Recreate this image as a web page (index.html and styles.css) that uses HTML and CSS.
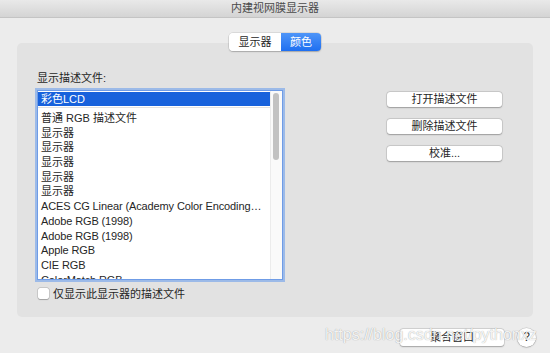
FILE: index.html
```html
<!DOCTYPE html>
<html lang="zh-CN">
<head>
<meta charset="utf-8">
<link rel="stylesheet" href="styles.css">
</head>
<body>
<div class="window">
  <div class="titlebar">内建视网膜显示器</div>
  <div class="tabs">
    <div class="seg">显示器</div>
    <div class="seg active">颜色</div>
  </div>
  <div class="panel">
    <div class="left">
      <div class="label">显示描述文件:</div>
      <div class="list">
        <div class="items">
          <div class="sel">彩色LCD</div>
          <div class="sep"></div>
          <div class="row">普通 RGB 描述文件</div>
          <div class="row">显示器</div>
          <div class="row">显示器</div>
          <div class="row">显示器</div>
          <div class="row">显示器</div>
          <div class="row">显示器</div>
          <div class="row latin">ACES CG Linear (Academy Color Encoding…</div>
          <div class="row latin">Adobe RGB (1998)</div>
          <div class="row latin">Adobe RGB (1998)</div>
          <div class="row latin">Apple RGB</div>
          <div class="row latin">CIE RGB</div>
          <div class="row latin">ColorMatch RGB</div>
        </div>
        <div class="track"><div class="thumb"></div></div>
      </div>
      <div class="check">
        <span class="box"></span>
        <span>仅显示此显示器的描述文件</span>
      </div>
    </div>
    <div class="right">
      <div class="btn">打开描述文件</div>
      <div class="btn">删除描述文件</div>
      <div class="btn">校准...</div>
    </div>
  </div>
  <div class="footer">
    <div class="btn wide">聚合窗口</div>
    <div class="help">?</div>
  </div>
  <div class="watermark">https://blog.csdn.net/pythonxz</div>
</div>
</body>
</html>
```
FILE: styles.css
```css
* { box-sizing: border-box; }
body {
  margin: 0;
  width: 550px;
  height: 353px;
  overflow: hidden;
  background: #ececec;
  font-family: "Liberation Sans", "Noto Sans CJK SC", sans-serif;
  font-size: 11px;
  color: #262626;
}
.window {
  position: relative;
  width: 550px;
  height: 353px;
  display: flex;
  flex-direction: column;
}
.titlebar {
  height: 18px;
  line-height: 17px;
  text-align: center;
  color: #4a4a4a;
  background: linear-gradient(#e9e9e9, #d4d4d4);
  border-bottom: 1px solid #c4c4c4;
}
.tabs {
  position: relative;
  z-index: 1;
  align-self: center;
  display: flex;
  margin-top: 15px;
  margin-bottom: -8px;
  height: 18px;
  border-radius: 4px;
  box-shadow: 0 0 0 0.5px rgba(0,0,0,0.15), 0 1px 1.5px rgba(0,0,0,0.2);
  overflow: hidden;
}
.seg {
  width: 52px;
  line-height: 18px;
  text-align: center;
  background: #fff;
}
.seg.active {
  width: 40px;
  color: #fff;
  background: linear-gradient(#4e95f8, #1e6ff1);
}
.panel {
  margin: 0 17px;
  height: 274px;
  padding: 29px 31px 0 20px;
  background: #e2e2e2;
  border-radius: 5px;
  display: flex;
  justify-content: space-between;
}
.left { width: 246px; }
.label {
  height: 13px;
  line-height: 13px;
  margin-bottom: 5px;
}
.list {
  height: 190px;
  display: flex;
  background: #fff;
  border: 1px solid #6f9ce6;
  box-shadow: 0 0 0 2px rgba(110,160,236,0.6);
  overflow: hidden;
}
.items {
  flex: 1;
  padding-top: 1px;
  min-width: 0;
}
.sel {
  height: 14px;
  line-height: 14px;
  color: #fff;
  background: #1862dc;
  margin-left: -2px;
  padding-left: 5px;
}
.sep {
  height: 1px;
  background: #e2e2e2;
  margin: 1px 0 3px;
}
.row {
  height: 14.7px;
  line-height: 14.7px;
  padding-left: 3px;
  white-space: nowrap;
  overflow: hidden;
}
.row.latin { letter-spacing: -0.12px; }
.track {
  width: 12px;
  padding: 2px 3px 0 2px;
  background: #fafafa;
  border-left: 1px solid #ececec;
}
.thumb {
  height: 67px;
  border-radius: 3px;
  background: #c2c2c2;
}
.check {
  margin-top: 7px;
  display: flex;
  align-items: center;
  gap: 4px;
  height: 12px;
}
.box {
  width: 11px;
  height: 11px;
  margin-left: 1px;
  background: #fff;
  border-radius: 2px;
  box-shadow: 0 0 0 0.5px rgba(0,0,0,0.2), 0 0.5px 1px rgba(0,0,0,0.2);
}
.right {
  width: 115px;
  margin-top: 20px;
  display: flex;
  flex-direction: column;
  gap: 12px;
}
.btn {
  height: 15px;
  line-height: 15px;
  text-align: center;
  background: #fff;
  border-radius: 3px;
  box-shadow: 0 0 0 0.5px rgba(0,0,0,0.15), 0 0.5px 1.5px rgba(0,0,0,0.25);
}
.footer {
  margin-top: 11px;
  display: flex;
  justify-content: flex-end;
  align-items: center;
  gap: 13px;
  padding-right: 14px;
}
.btn.wide {
  width: 104px;
  height: 17px;
  line-height: 17px;
}
.help {
  width: 19px;
  height: 19px;
  border-radius: 50%;
  background: #fff;
  text-align: center;
  line-height: 19px;
  font-size: 12px;
  box-shadow: 0 0 0 0.5px rgba(0,0,0,0.15), 0 0.5px 1.5px rgba(0,0,0,0.25);
}
.watermark {
  position: absolute;
  left: 325px;
  top: 326px;
  font-family: "Liberation Sans", sans-serif;
  font-size: 16px;
  line-height: 18px;
  color: rgba(255,255,255,0.9);
  text-shadow: 0 0 1px rgba(0,0,0,0.4);
  white-space: nowrap;
  pointer-events: none;
}
```
